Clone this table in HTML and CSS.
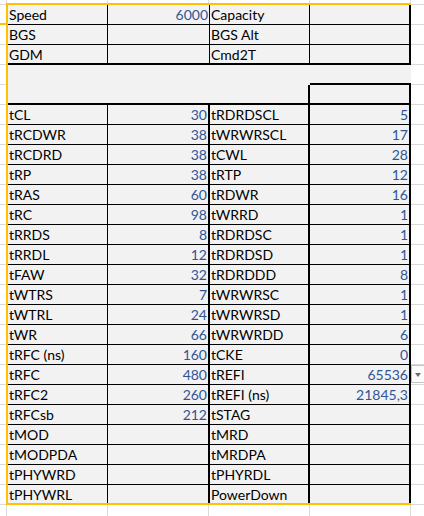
FILE: index.html
```html
<!DOCTYPE html>
<html lang="en">
<head>
<meta charset="utf-8">
<title>Timings</title>
<link rel="stylesheet" href="styles.css">
</head>
<body>
<div class="sheet">
  <div class="row r-top">
    <div class="c">Speed</div><div class="c n">6000</div><div class="c">Capacity</div><div class="c"></div>
  </div>
  <div class="row r-top">
    <div class="c">BGS</div><div class="c n"></div><div class="c">BGS Alt</div><div class="c"></div>
  </div>
  <div class="row r-top r-end">
    <div class="c">GDM</div><div class="c n"></div><div class="c">Cmd2T</div><div class="c"></div>
  </div>
  <div class="row r-gap">
    <div class="c"></div><div class="c"></div><div class="c"></div><div class="c"></div>
  </div>
  <div class="row r-box">
    <div class="c"></div><div class="c"></div><div class="c"></div><div class="c"></div>
  </div>
  <div class="row r-main"><div class="c">tCL</div><div class="c n">30</div><div class="c">tRDRDSCL</div><div class="c n">5</div></div>
  <div class="row r-main"><div class="c">tRCDWR</div><div class="c n">38</div><div class="c">tWRWRSCL</div><div class="c n">17</div></div>
  <div class="row r-main"><div class="c">tRCDRD</div><div class="c n">38</div><div class="c">tCWL</div><div class="c n">28</div></div>
  <div class="row r-main"><div class="c">tRP</div><div class="c n">38</div><div class="c">tRTP</div><div class="c n">12</div></div>
  <div class="row r-main"><div class="c">tRAS</div><div class="c n">60</div><div class="c">tRDWR</div><div class="c n">16</div></div>
  <div class="row r-main"><div class="c">tRC</div><div class="c n">98</div><div class="c">tWRRD</div><div class="c n">1</div></div>
  <div class="row r-main"><div class="c">tRRDS</div><div class="c n">8</div><div class="c">tRDRDSC</div><div class="c n">1</div></div>
  <div class="row r-main"><div class="c">tRRDL</div><div class="c n">12</div><div class="c">tRDRDSD</div><div class="c n">1</div></div>
  <div class="row r-main"><div class="c">tFAW</div><div class="c n">32</div><div class="c">tRDRDDD</div><div class="c n">8</div></div>
  <div class="row r-main"><div class="c">tWTRS</div><div class="c n">7</div><div class="c">tWRWRSC</div><div class="c n">1</div></div>
  <div class="row r-main"><div class="c">tWTRL</div><div class="c n">24</div><div class="c">tWRWRSD</div><div class="c n">1</div></div>
  <div class="row r-main"><div class="c">tWR</div><div class="c n">66</div><div class="c">tWRWRDD</div><div class="c n">6</div></div>
  <div class="row r-main"><div class="c">tRFC (ns)</div><div class="c n">160</div><div class="c">tCKE</div><div class="c n">0</div></div>
  <div class="row r-main"><div class="c">tRFC</div><div class="c n">480</div><div class="c">tREFI</div><div class="c n">65536</div></div>
  <div class="row r-main"><div class="c">tRFC2</div><div class="c n">260</div><div class="c">tREFI (ns)</div><div class="c n">21845,3</div></div>
  <div class="row r-main"><div class="c">tRFCsb</div><div class="c n">212</div><div class="c">tSTAG</div><div class="c n"></div></div>
  <div class="row r-main"><div class="c">tMOD</div><div class="c n"></div><div class="c">tMRD</div><div class="c n"></div></div>
  <div class="row r-main"><div class="c">tMODPDA</div><div class="c n"></div><div class="c">tMRDPA</div><div class="c n"></div></div>
  <div class="row r-main"><div class="c">tPHYWRD</div><div class="c n"></div><div class="c">tPHYRDL</div><div class="c n"></div></div>
  <div class="row r-main r-last"><div class="c">tPHYWRL</div><div class="c n"></div><div class="c">PowerDown</div><div class="c n"></div></div>
  <div class="dd"></div>
</div>
</body>
</html>
```
FILE: styles.css
```css
html, body {
  margin: 0;
  padding: 0;
}

body {
  height: 516px;
  overflow: hidden;
  font-family: Lato, "Liberation Sans", sans-serif;
  font-size: 14px;
  color: #000;
  background-color: #fff;
  background-image:
    linear-gradient(#ffc000, #ffc000),
    repeating-linear-gradient(to bottom, transparent 0 4px, #dadada 4px 5px, transparent 5px 20px),
    repeating-linear-gradient(to right, transparent 0 6px, #dadada 6px 7px, transparent 7px 101px);
  background-size: 6px 2px, auto, auto;
  background-position: 0 23px, 0 0, 0 0;
  background-repeat: no-repeat, repeat, repeat;
}

.sheet {
  position: relative;
  margin: 3px 0 0 6px;
  width: 405px;
  box-sizing: border-box;
  border-top: 2px solid #ffc000;
  border-left: 2px solid #ffc000;
  border-bottom: 2px solid #ffc000;
  background: #f2f2f2;
  display: grid;
  grid-template-columns: 100px 102px 100px 101px;
  grid-template-rows: repeat(24, 20px) 18px;
}

.row {
  display: contents;
}

.c {
  box-sizing: border-box;
  line-height: 19px;
  padding: 0 1px;
  white-space: nowrap;
  overflow: hidden;
  border: 0 solid #000;
}

.n {
  text-align: right;
  color: #2f5597;
}

/* top block */
.r-top .c {
  border-bottom-width: 1px;
  border-right-width: 1px;
}
.r-top .c:nth-child(4) {
  border-right-width: 2px;
}
.r-end .c {
  border-bottom-width: 2px;
}

/* spacer rows */
.r-gap .c:nth-child(4) {
  border-bottom-width: 2px;
}
.r-box .c {
  border-bottom-width: 2px;
}
.r-box .c:nth-child(3),
.r-box .c:nth-child(4) {
  border-right-width: 2px;
}

/* main block */
.r-main .c {
  border-bottom-width: 1px;
  border-right-width: 2px;
}
.r-main .c:nth-child(1) {
  border-right-width: 1px;
}
.r-last .c {
  border-bottom-width: 0;
}

/* filter dropdown button */
.dd {
  position: absolute;
  left: 403px;
  top: 360px;
  width: 14px;
  height: 18px;
  box-sizing: border-box;
  border: 1px solid #c9c2c2;
  background: #fbfbfb;
}
.dd::after {
  content: "";
  position: absolute;
  left: 3px;
  top: 7px;
  border-left: 3.5px solid transparent;
  border-right: 3.5px solid transparent;
  border-top: 4px solid #6a6a6a;
}
```
